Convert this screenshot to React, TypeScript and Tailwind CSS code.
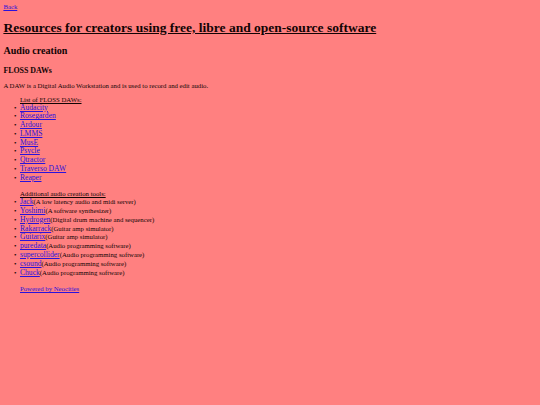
import React from 'react';

const daws = ['Audacity', 'Rosegarden', 'Ardour', 'LMMS', 'MusE', 'Psycle', 'Qtractor', 'Traverso DAW', 'Reaper'];

const tools: [string, string][] = [
  ['Jack', '(A low latency audio and midi server)'],
  ['Yoshimi', '(A software synthesizer)'],
  ['Hydrogen', '(Digital drum machine and sequencer)'],
  ['Rakarrack', '(Guitar amp simulator)'],
  ['Guitarix', '(Guitar amp simulator)'],
  ['puredata', '(Audio programming software)'],
  ['supercollider', '(Audio programming software)'],
  ['csound', '(Audio programming software)'],
  ['Chuck', '(Audio programming software)'],
];

const link = 'text-[#2a12dc] underline';
const bigLink = 'text-[#2a12dc] underline text-[7.6px]';

function Bullet({ children }: { children: React.ReactNode }) {
  return (
    <li className="flex items-baseline">
      <span className="w-[6px] shrink-0 text-[7px]">•</span>
      <span>{children}</span>
    </li>
  );
}

export default function App() {
  return (
    <div className="min-h-[405px] bg-[#ff8080] px-[3.4px] pt-[2px] font-['Liberation_Serif',serif] text-[6.75px] leading-[9px] text-[#120404]">
      <a href="#" className={link}>Back</a>
      <h1 className="mt-[8px] text-[13.5px] leading-[18px] font-bold underline">
        Resources for creators using free, libre and open-source software
      </h1>
      <h2 className="mt-[7px] text-[10.1px] leading-[14px] font-bold">Audio creation</h2>
      <h3 className="mt-[6.5px] text-[7.9px] leading-[11px] font-bold">FLOSS DAWs</h3>
      <p className="mt-[5px]">A DAW is a Digital Audio Workstation and is used to record and edit audio.</p>

      <div className="mt-[5px] pl-[16.6px] underline">List of FLOSS DAWs:</div>
      <ul className="pl-[10.6px] leading-[8.8px]">
        {daws.map((d) => (
          <Bullet key={d}>
            <a href="#" className={bigLink}>{d}</a>
          </Bullet>
        ))}
      </ul>

      <div className="mt-[6.5px] pl-[16.6px] underline">Additional audio creation tools:</div>
      <ul className="pl-[10.6px] leading-[8.8px]">
        {tools.map(([name, desc]) => (
          <Bullet key={name}>
            <a href="#" className={bigLink}>{name}</a>
            {desc}
          </Bullet>
        ))}
      </ul>

      <div className="mt-[7px] pl-[16.6px]">
        <a href="#" className={link}>Powered by Neocities</a>
      </div>
    </div>
  );
}
